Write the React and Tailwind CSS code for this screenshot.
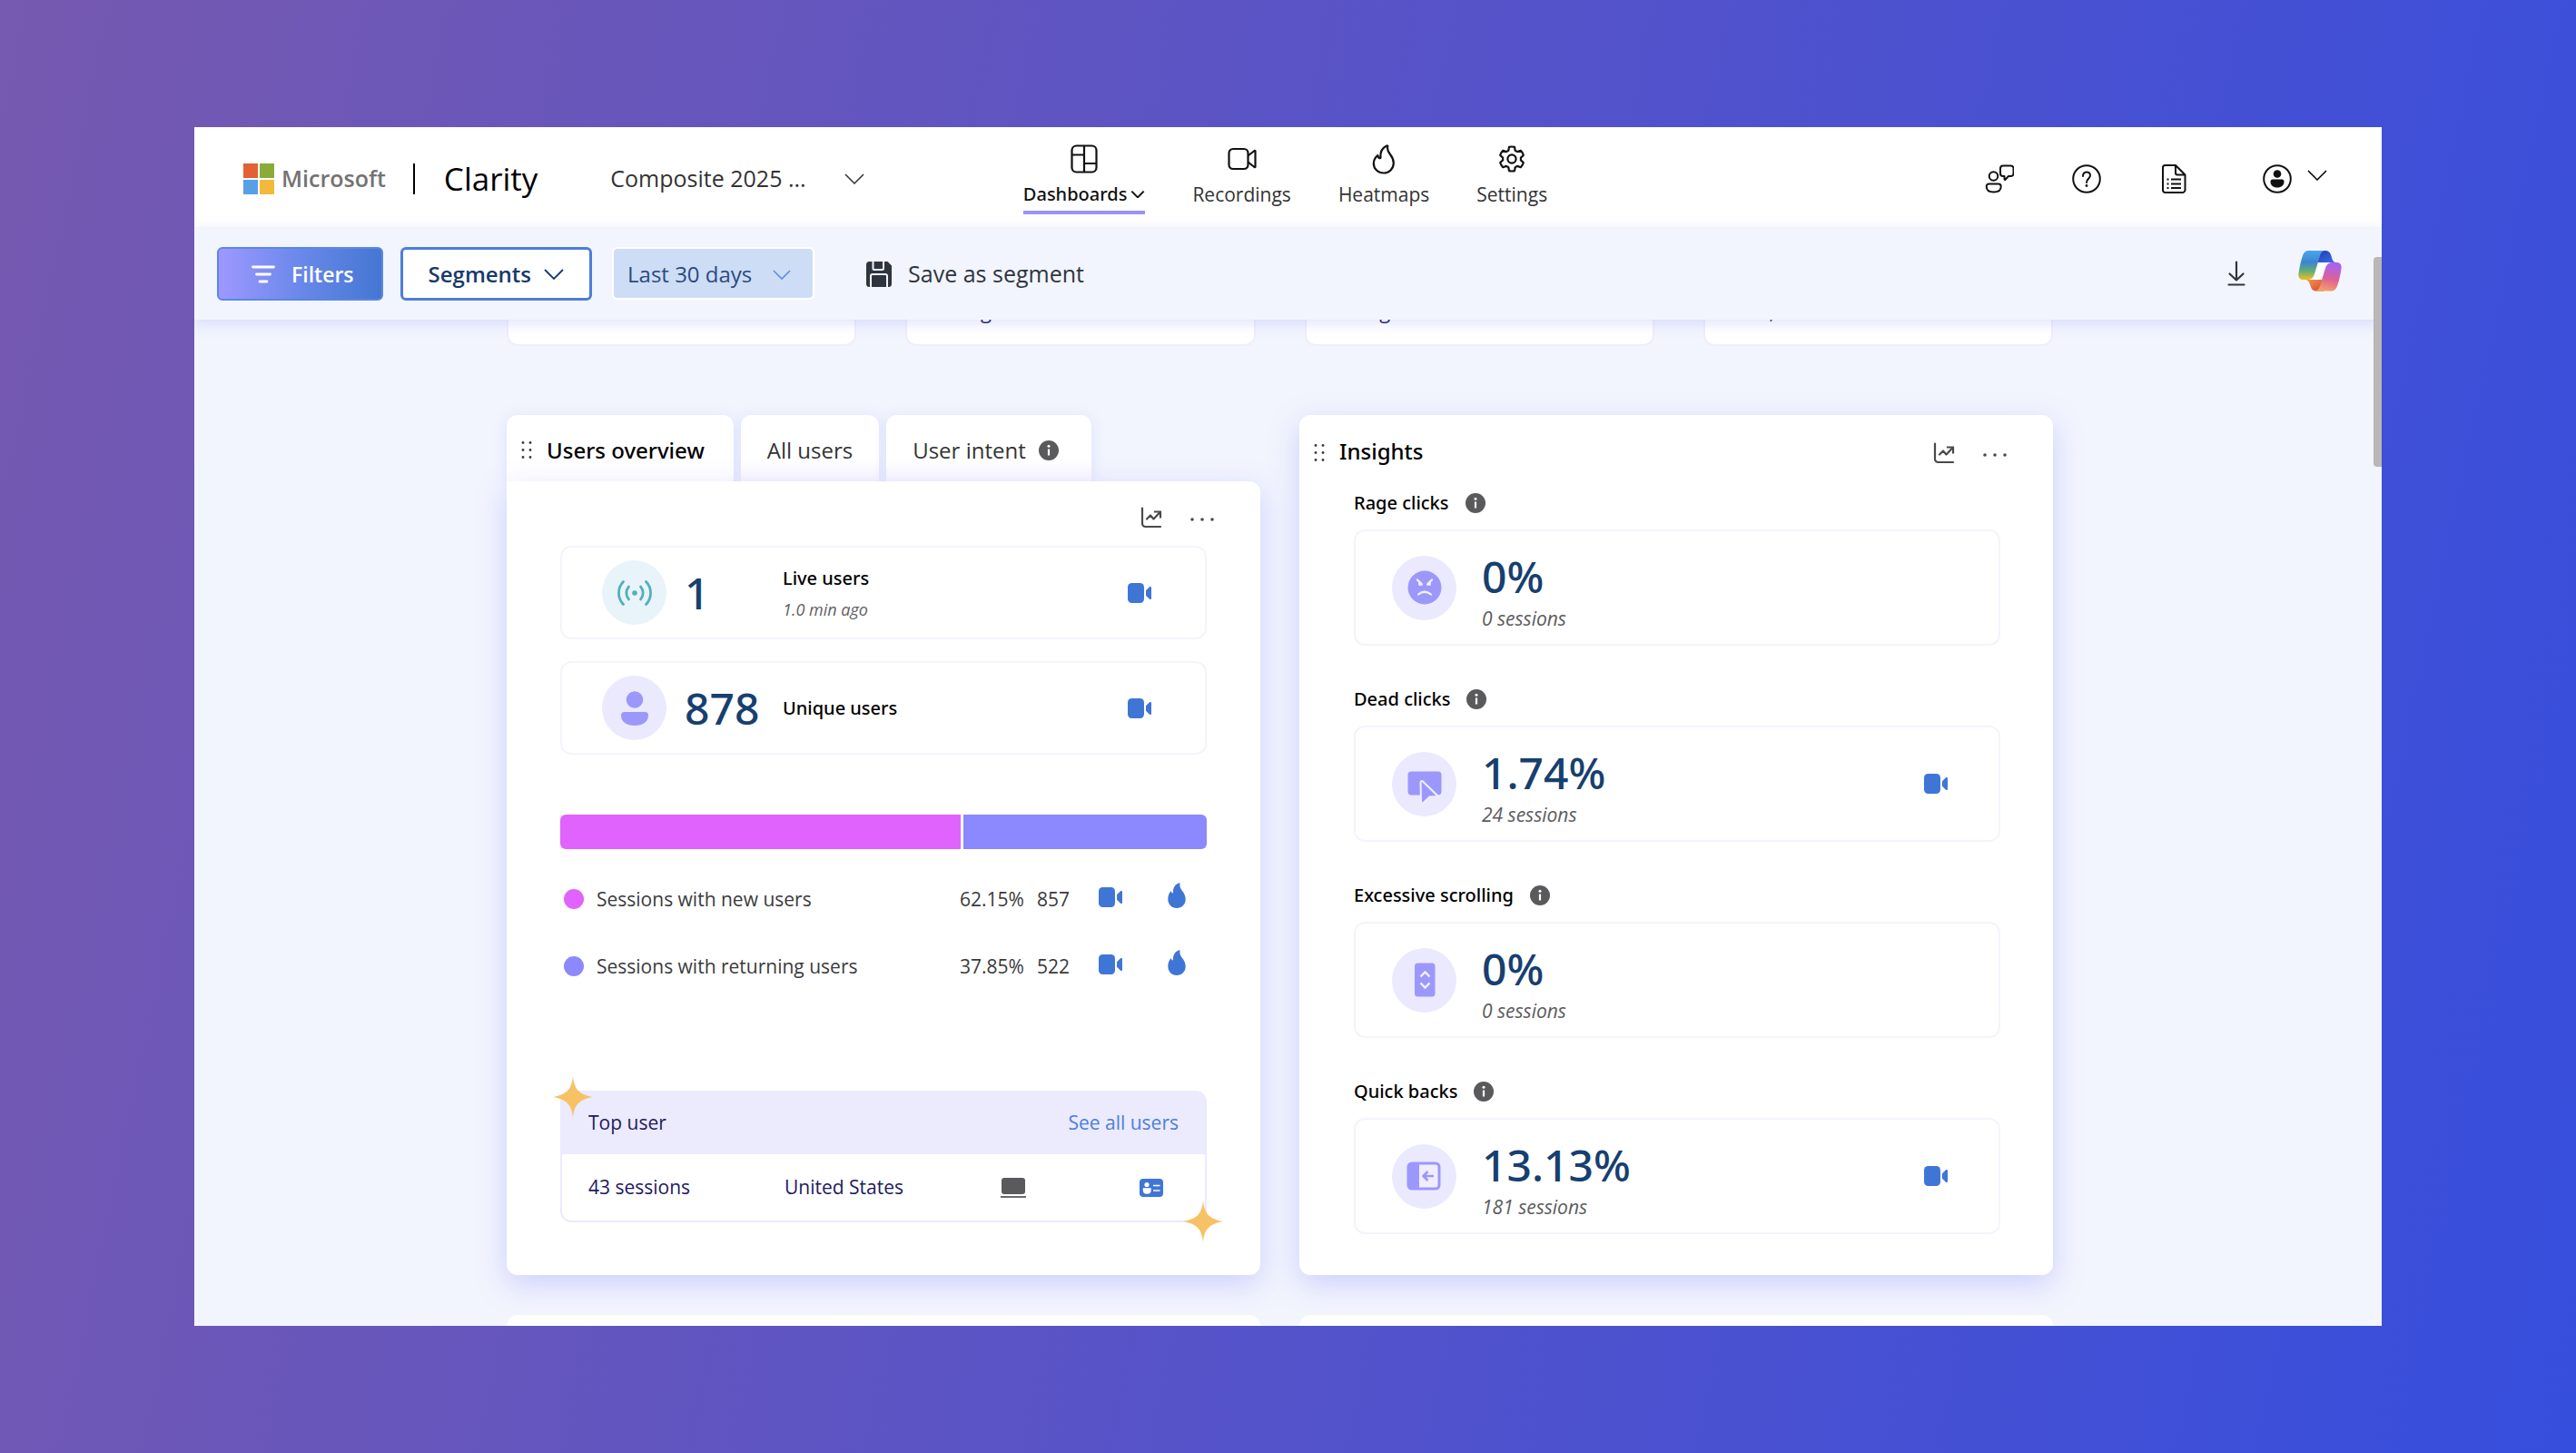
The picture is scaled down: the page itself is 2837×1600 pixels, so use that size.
import React from "react";

const Chevron = ({ className = "w-[22px] h-3", width = 2 }) => (
  <svg viewBox="0 0 22 12" className={className} fill="none" stroke="currentColor" strokeWidth={width}>
    <path d="M1 1l10 10L21 1" />
  </svg>
);

const VideoIcon = () => (
  <svg viewBox="0 0 26 22" className="w-[26px] h-[22px]" fill="#3f76d6">
    <rect width="18" height="22" rx="4.5" />
    <path d="M20 8.2l4-3.9c.8-.8 2-.3 2 .8v11.8c0 1.1-1.2 1.6-2 .8l-4-3.9z" />
  </svg>
);

const FlameIcon = () => (
  <svg viewBox="0 0 20 28" className="w-5 h-7" fill="#3f76d6">
    <path d="M12.6.3C8.3 1.8 5.8 5.5 5.9 10.8c0 .8-.8 1-1.2.4-.5-.7-.7-1.5-.8-2.3C1.5 11 .3 14.5.3 18 .3 24 4.6 28 10 28s9.7-4 9.7-9.7c0-3.7-1.5-6.4-3.3-8.8C14.3 6.7 12.9 4.3 13.5 1.2c.1-.6-.3-1.1-.9-.9z" />
  </svg>
);

const InfoIcon = () => (
  <svg viewBox="0 0 22 22" className="w-[22px] h-[22px]">
    <circle cx="11" cy="11" r="11" fill="#5a5a5c" />
    <circle cx="11" cy="6.3" r="1.5" fill="#fff" />
    <path d="M11 9.5v7" stroke="#fff" strokeWidth="2.2" />
  </svg>
);

const TrendIcon = () => (
  <svg viewBox="0 0 24 24" className="w-6 h-6" fill="none" stroke="#4a4a4c" strokeWidth="2.2" strokeLinecap="round">
    <path d="M2 1.5V18.5a3.5 3.5 0 003.5 3.5H22" />
    <path d="M7 13.5l4-4 3.5 4L21 6.5" strokeLinejoin="round" />
    <path d="M16 5.5h6v6" strokeLinecap="square" />
  </svg>
);

const MoreIcon = () => (
  <svg viewBox="0 0 26 4" className="w-[26px] h-1" fill="#4a4a4c">
    <circle cx="2" cy="2" r="1.8" />
    <circle cx="13" cy="2" r="1.8" />
    <circle cx="24" cy="2" r="1.8" />
  </svg>
);

const DragHandle = () => (
  <svg viewBox="0 0 12 19" className="w-3 h-[19px]" fill="#3c3c3e">
    {[1.5, 9.5, 17.5].map((y) => (
      <React.Fragment key={y}>
        <circle cx="2" cy={y} r="1.4" />
        <circle cx="10" cy={y} r="1.4" />
      </React.Fragment>
    ))}
  </svg>
);

const Star = ({ className }) => (
  <svg viewBox="0 0 44 46" className={`absolute w-11 h-[46px] ${className}`} fill="#f6c266">
    <path d="M22 0c1.5 14 6 20 22 23-16 3-20.5 9-22 23-1.5-14-6-20-22-23C16 20 20.5 14 22 0z" />
  </svg>
);

const MicrosoftLogo = () => (
  <svg viewBox="0 0 34 34" className="w-[34px] h-[34px]">
    <rect width="16" height="16" fill="#e26236" />
    <rect x="18" width="16" height="16" fill="#8aab38" />
    <rect y="18" width="16" height="16" fill="#57a0e6" />
    <rect x="18" y="18" width="16" height="16" fill="#f2b93d" />
  </svg>
);

const CopilotLogo = () => (
  <svg viewBox="0 0 48 45" className="w-12 h-[45px]">
    <defs>
      <linearGradient id="cp-left" x1="0" y1="0" x2="0" y2="1">
        <stop offset="0" stopColor="#4aa6ee" />
        <stop offset=".4" stopColor="#3d84d2" />
        <stop offset=".68" stopColor="#5dac7a" />
        <stop offset="1" stopColor="#ecc01f" />
      </linearGradient>
      <linearGradient id="cp-right" x1=".3" y1="0" x2="0.1" y2="1">
        <stop offset="0" stopColor="#a862f0" />
        <stop offset=".5" stopColor="#dc6196" />
        <stop offset="1" stopColor="#f8a860" />
      </linearGradient>
      <linearGradient id="cp-top" x1="0" y1="0" x2="1" y2="1">
        <stop offset="0" stopColor="#2337b8" />
        <stop offset="1" stopColor="#3a72e6" />
      </linearGradient>
      <linearGradient id="cp-bottom" x1="0" y1="0" x2="1" y2="1">
        <stop offset="0" stopColor="#f09a4e" />
        <stop offset="1" stopColor="#d8492c" />
      </linearGradient>
    </defs>
    <path d="M20 0h10c3 0 5 1.5 6 4.5l1.6 5c.7 2 2 3.3 4.4 3.5H22z" fill="url(#cp-top)" />
    <path d="M28 44.5H20c-3 0-5-1.5-6-4.5l-1.6-4.5c-.7-2-2-3.2-4.4-3.5h20z" fill="url(#cp-bottom)" />
    <path d="M11.5 0H29c-2.5.5-4 2.5-5 5.5l-6 20c-1.2 4-3.5 6.5-8 6.5H5.5C1.5 32-.2 29 .5 25 1.5 18 3 11 5 5.5 6.2 2 8.3 0 11.5 0z" fill="url(#cp-left)" />
    <path d="M36.5 44.5H19c2.5-.5 4-2.5 5-5.5l6-19.5c1.2-4 3.5-6.5 8-6.5h4.5c4 0 5.7 3 5 7-1 7-2.5 13.5-4.5 19-1.2 3.5-3.3 5.5-6.5 5.5z" fill="url(#cp-right)" />
    <path d="M22.5 13.5h8.5c-1 1.2-1.7 3-2.3 5l-3 9.5c-1 2.7-3 4-5.5 4H15c2-1 3-3.5 3.8-6z" fill="#fff" />
  </svg>
);

const navIcons = {
  dashboards: (
    <>
      <rect x="2.5" y="2.5" width="27" height="29" rx="5" />
      <path d="M16 2.5v29M2.5 12.5H16M16 22h13.5" />
    </>
  ),
  recordings: (
    <>
      <rect x="1.5" y="6" width="21" height="22" rx="4.5" />
      <path d="M22.5 13.5l7-5.5c.4-.3 1 0 1 .5v17c0 .5-.6.8-1 .5l-7-5.5" />
    </>
  ),
  heatmaps: (
    <path d="M19.5 2.5c-5 2-7.5 7-7 13-.2 1-1.4 1-2 .2-.7-.8-1-1.8-1.2-2.7C6 16 4.8 18.5 4.8 22c0 6 5 10.5 11 10.5s11-4.5 11-11c0-4-1.8-7-3.8-9.5-2.3-3-3.7-5.5-2.7-8.8.1-.5-.3-.9-.8-.7z" />
  ),
  settings: (
    <>
      <circle cx="16" cy="17" r="4.6" />
      <path d="M13 2.7q3-.8 6 0l.7 3.8 2.4 1.4 3.7-1.3q2.2 2.3 3 5.2l-2.9 2.6v2.8l2.9 2.6q-.8 2.9-3 5.2l-3.7-1.3-2.4 1.4-.7 3.8q-3 .8-6 0l-.7-3.8-2.4-1.4L6.2 25q-2.2-2.3-3-5.2l2.9-2.6v-2.8l-2.9-2.6q.8-2.9 3-5.2l3.7 1.3 2.4-1.4z" transform="translate(0 1.2)" />
    </>
  ),
};

const NAV = [
  { id: "dashboards", label: "Dashboards", active: true },
  { id: "recordings", label: "Recordings" },
  { id: "heatmaps", label: "Heatmaps" },
  { id: "settings", label: "Settings" },
];

const insightIcons = {
  rage: (
    <>
      <circle cx="19" cy="19" r="18.5" fill="#9c98fb" />
      <path d="M11 10.5l5 5M27 10.5l-5 5" stroke="#f3f1ff" strokeWidth="2.2" strokeLinecap="round" />
      <circle cx="14" cy="15" r="2" fill="#f3f1ff" />
      <circle cx="24" cy="15" r="2" fill="#f3f1ff" />
      <path d="M12 26.5q7-5.5 14 0" fill="none" stroke="#f3f1ff" strokeWidth="2.2" strokeLinecap="round" />
    </>
  ),
  dead: (
    <>
      <rect x=".5" y="5.5" width="37" height="26" rx="4" fill="#9c98fb" />
      <path d="M14.5 17.5c0-1.4 1.6-2 2.5-1L34 33l-9.5.6-7 6.4c-1 .8-2.5.3-2.5-1z" fill="#9c98fb" stroke="#f0eeff" strokeWidth="2" />
    </>
  ),
  scroll: (
    <>
      <rect x="8" y=".5" width="22.5" height="37" rx="3.5" fill="#9c98fb" />
      <path d="M14.5 15.5l5-5 5 5M14.5 22.5l5 5 5-5" fill="none" stroke="#f3f1ff" strokeWidth="2.4" />
    </>
  ),
  back: (
    <>
      <rect x="1" y="5" width="34" height="28" rx="4" fill="#efedff" stroke="#9c98fb" strokeWidth="3" />
      <path d="M1 8a4 4 0 014-4h8v30H5a4 4 0 01-4-4z" fill="#9c98fb" />
      <path d="M29 19H18M22.5 14l-5 5 5 5" fill="none" stroke="#9c98fb" strokeWidth="2.6" />
    </>
  ),
};

const INSIGHTS = [
  { id: "rage", label: "Rage clicks", value: "0%", sessions: "0 sessions" },
  { id: "dead", label: "Dead clicks", value: "1.74%", sessions: "24 sessions", recordings: true },
  { id: "scroll", label: "Excessive scrolling", value: "0%", sessions: "0 sessions" },
  { id: "back", label: "Quick backs", value: "13.13%", sessions: "181 sessions", recordings: true },
];

const SESSIONS = [
  { label: "Sessions with new users", percent: "62.15%", count: 857, dot: "bg-[#e063fd]" },
  { label: "Sessions with returning users", percent: "37.85%", count: 522, dot: "bg-[#8c88fd]" },
];

const Header = () => (
  <header className="grid grid-cols-[1fr_auto_1fr] h-[110px] shrink-0 bg-white pl-[54px] pr-[60px]">
    <div className="flex items-center pt-1">
      <MicrosoftLogo />
      <span className="ml-2 text-[25px] font-semibold text-[#737373]">Microsoft</span>
      <span className="ml-[30px] h-[34px] w-0.5 bg-black" />
      <span className="ml-8 text-[35px] text-black">Clarity</span>
      <div className="ml-20 flex items-center gap-[42px] text-[#333]">
        <select aria-label="Project" className="appearance-none text-[25px] outline-none">
          <option>Composite 2025 ...</option>
        </select>
        <Chevron width={1.5} />
      </div>
    </div>

    <nav className="flex items-start gap-[52px] pt-[18px]">
      {NAV.map(({ id, label, active }) => (
        <button key={id} className="flex flex-col items-center">
          <svg viewBox="0 0 32 34" className="w-8 h-[34px]" fill="none" stroke="#111" strokeWidth="2.2" strokeLinejoin="round">
            {navIcons[id]}
          </svg>
          <span
            className={`mt-2 flex items-center gap-1 leading-7 ${
              active ? "font-['Noto_Sans'] text-[20px] font-medium text-[#111]" : "text-[21px] text-[#333]"
            }`}
          >
            {label}
            {active && <Chevron className="w-4 h-2" width={3} />}
          </span>
          {active && <span className="mt-1 h-1 w-full bg-[#9b93fb]" />}
        </button>
      ))}
    </nav>

    <div className="flex items-center justify-end pt-1">
      <button aria-label="Feedback">
        <svg viewBox="0 0 32 32" className="w-8 h-8" fill="none" stroke="#111" strokeWidth="2" strokeLinejoin="round">
          <circle cx="9.5" cy="13" r="4.8" />
          <path d="M4.5 21.5h10.5a2.7 2.7 0 012.7 2.7c0 4-3 6.3-8 6.3s-8-2.3-8-6.3a2.7 2.7 0 012.8-2.7z" />
          <path d="M20 1.5h8.5a3 3 0 013 3v5.5a3 3 0 01-3 3h-2.5l-3.5 3.7c-.5.5-1 .2-1-.4V13h-1.5a3 3 0 01-3-3V4.5a3 3 0 013-3z" />
        </svg>
      </button>
      <button aria-label="Help" className="ml-16">
        <svg viewBox="0 0 32 32" className="w-8 h-8" fill="none" stroke="#111" strokeWidth="2">
          <circle cx="16" cy="16" r="14.8" />
          <path d="M12 13c0-6 8-6 8-.8 0 3.5-4 3.8-4 7.8" strokeLinecap="round" />
          <circle cx="16" cy="23.5" r="1.4" fill="#111" stroke="none" />
        </svg>
      </button>
      <button aria-label="Documentation" className="ml-16">
        <svg viewBox="0 0 32 32" className="w-8 h-8" fill="none" stroke="#111" strokeWidth="2" strokeLinejoin="round">
          <path d="M6.5 1h11.5L28.5 11.5V28a3 3 0 01-3 3h-19a2.5 2.5 0 01-2.5-2.5V3.5A2.5 2.5 0 016.5 1zM18 1v8.5a2 2 0 002 2h8.5" />
          <path d="M13 16.5h11M13 21.5h11M13 26h11M8.5 16.5h2M8.5 21.5h2M8.5 26h2" />
        </svg>
      </button>
      <button aria-label="Account" className="ml-[82px] flex items-center gap-[17px]">
        <svg viewBox="0 0 32 32" className="w-8 h-8" fill="#111">
          <circle cx="16" cy="16" r="14.8" fill="none" stroke="#111" strokeWidth="2" />
          <circle cx="16" cy="10.5" r="4.3" />
          <path d="M11 16.5h10a2.5 2.5 0 012.5 2.5c0 4-3 6.5-7.5 6.5S8.5 23 8.5 19a2.5 2.5 0 012.5-2.5z" />
        </svg>
        <Chevron className="mb-2 h-3 w-[22px]" width={1.5} />
      </button>
    </div>
  </header>
);

const Toolbar = () => (
  <div className="relative z-10 flex h-[102px] shrink-0 items-center bg-[#f2f5fd] pl-[25px] pr-11 shadow-[0_4px_14px_#8a8aff40]">
    <button className="flex h-[59px] items-center gap-[18px] rounded-md border-2 border-[#5a86e6] bg-linear-to-r from-[#9d98ff] via-[#6a88ea] to-[#4377d2] pt-0.5 pr-[30px] pl-9 text-[23px] font-semibold text-white">
      <svg viewBox="0 0 26 20" className="w-[26px] h-5" stroke="#fff" strokeWidth="2.8" strokeLinecap="round">
        <path d="M1.5 2h23M5.5 10h15M9 18h8" />
      </svg>
      Filters
    </button>
    <button className="ml-[19px] flex h-[59px] items-center gap-[14px] rounded-md border-[3px] border-[#4a7fd9] bg-white px-7 pt-0.5 text-[24px] font-semibold text-[#173a6b]">
      Segments
      <Chevron width={1.8} />
    </button>
    <div className="ml-[22px] flex h-[58px] items-center gap-[22px] rounded-md border-2 border-white bg-[#cdddf5] px-[15px] pt-0.5 pr-6 text-[#2b4a80]">
      <select aria-label="Date range" className="appearance-none text-[24px] outline-none">
        <option>Last 30 days</option>
      </select>
      <Chevron className="w-5 h-[11px] text-[#5f8ee0]" width={1.8} />
    </div>
    <button className="ml-[57px] flex items-center gap-[18px] pt-0.5 text-[25px] text-[#2f3540]">
      <svg viewBox="0 0 28 28" className="w-7 h-7">
        <path d="M3.5 0h20L28 4.5v20a3.5 3.5 0 01-3.5 3.5h-21A3.5 3.5 0 010 24.5v-21A3.5 3.5 0 013.5 0z" fill="#2f3540" />
        <path d="M7.5 0v7.5a1.5 1.5 0 001.5 1.5h8.5a1.5 1.5 0 001.5-1.5V0M5 28V16a2 2 0 012-2h14a2 2 0 012 2v12" fill="none" stroke="#f2f5fd" strokeWidth="2" />
      </svg>
      Save as segment
    </button>
    <button aria-label="Download" className="ml-auto">
      <svg viewBox="0 0 20 28" className="w-5 h-7" fill="none" stroke="#2f3540" strokeWidth="2.2" strokeLinecap="round" strokeLinejoin="round">
        <path d="M10 1.5v20M2.5 14.5l7.5 7 7.5-7M1.5 26.5h17" />
      </svg>
    </button>
    <button aria-label="Copilot" className="mb-1.5 ml-[58px]">
      <CopilotLogo />
    </button>
  </div>
);

const CardActions = () => (
  <div className="flex items-center gap-[31px]">
    <button aria-label="View trend">
      <TrendIcon />
    </button>
    <button aria-label="More options" className="pt-1">
      <MoreIcon />
    </button>
  </div>
);

const Stat = ({ icon, tint, value, label, note }) => (
  <div className="flex h-[103px] items-center rounded-xl border-2 border-[#f3f4fd] pl-11 pr-[59px]">
    <div className={`flex size-[71px] items-center justify-center rounded-full ${tint}`}>{icon}</div>
    <span className="ml-5 w-[108px] font-['Noto_Sans'] text-[48px] leading-[52px] font-medium text-[#173f70]">{value}</span>
    <div className="flex flex-col gap-2">
      <span className="font-['Noto_Sans'] text-[20px] leading-7 font-medium text-black">{label}</span>
      {note && <span className="text-[18px] leading-6 italic text-[#616163]">{note}</span>}
    </div>
    <button aria-label={`${label} recordings`} className="ml-auto">
      <VideoIcon />
    </button>
  </div>
);

const UsersOverview = () => (
  <section className="flex flex-col">
    <div className="flex h-[73px] gap-2" role="tablist">
      <button role="tab" aria-selected="true" className="flex items-center gap-4 rounded-t-xl bg-white pt-1 pl-4 pr-8 font-['Noto_Sans'] text-[24px] font-medium text-black shadow-[0_2px_16px_#8a8aff30]">
        <DragHandle />
        Users overview
      </button>
      <button role="tab" aria-selected="false" className="rounded-t-xl bg-linear-to-b from-white from-70% to-[#f8f6ff] px-[29px] pt-1 text-[24px] text-[#333] shadow-[0_2px_16px_#8a8aff30]">
        All users
      </button>
      <button role="tab" aria-selected="false" className="flex items-center gap-[14px] rounded-t-xl bg-linear-to-b from-white from-70% to-[#f8f6ff] pt-1 pl-[29px] pr-9 text-[24px] text-[#333] shadow-[0_2px_16px_#8a8aff30]">
        User intent
        <InfoIcon />
      </button>
    </div>

    <div className="relative rounded-xl rounded-tl-none bg-white px-[59px] pb-[58px] shadow-[0_10px_32px_#8a8aff59]">
      <div className="flex h-[71px] items-center justify-end pt-2 -mr-2">
        <CardActions />
      </div>

      <div className="flex flex-col gap-6">
        <Stat
          value="1"
          label="Live users"
          note="1.0 min ago"
          tint="bg-[#e8f4fa]"
          icon={
            <svg viewBox="0 0 38 30" className="w-[38px] h-[30px]" fill="none" stroke="#55aebb" strokeWidth="2.8" strokeLinecap="round">
              <circle cx="19" cy="15" r="2.8" fill="#55aebb" stroke="none" />
              <path d="M12.5 8a10.5 10.5 0 000 14M25.5 8a10.5 10.5 0 010 14M6.5 2.5a18 18 0 000 25M31.5 2.5a18 18 0 010 25" />
            </svg>
          }
        />
        <Stat
          value="878"
          label="Unique users"
          tint="bg-[#ebe9fe]"
          icon={
            <svg viewBox="0 0 30 38" className="w-[30px] h-[38px]" fill="#9c98fb">
              <circle cx="15" cy="9.5" r="9.3" />
              <path d="M3.5 23h23a3.5 3.5 0 013.5 3.5C30 34 24 38 15 38S0 34 0 26.5A3.5 3.5 0 013.5 23z" />
            </svg>
          }
        />
      </div>

      <div className="mt-[66px] grid h-[38px] grid-cols-[62.15fr_37.85fr] gap-[3px]">
        <div className="rounded-l-md bg-[#e063fd]" />
        <div className="rounded-r-md bg-[#8c88fd]" />
      </div>

      <ul className="mt-[18px]">
        {SESSIONS.map(({ label, percent, count, dot }) => (
          <li key={label} className="flex h-[74px] items-center pl-1 pr-[23px] text-[21px] text-[#3b3b3d]">
            <span className={`size-[22px] rounded-full ${dot}`} />
            <span className="ml-[14px] pt-0.5">{label}</span>
            <span className="ml-auto pt-0.5">{percent}</span>
            <span className="ml-[14px] pt-0.5">{count}</span>
            <button aria-label={`${label} recordings`} className="ml-8 pb-1">
              <VideoIcon />
            </button>
            <button aria-label={`${label} heatmaps`} className="ml-[50px] pb-2">
              <FlameIcon />
            </button>
          </li>
        ))}
      </ul>

      <div className="relative mt-[100px] rounded-xl border-2 border-[#eceafd] text-[21px] text-[#211a5e]">
        <div className="flex h-[68px] items-center justify-between rounded-t-lg bg-[#eceafd] px-[29px]">
          <span>Top user</span>
          <a href="#users" className="text-[#4a7fdc]">
            See all users
          </a>
        </div>
        <div className="grid h-[73px] grid-cols-[216fr_238fr_153fr_72fr] items-center pl-[29px]">
          <span>43 sessions</span>
          <span>United States</span>
          <svg viewBox="0 0 28 22" className="w-7 h-[22px]">
            <rect x="1" width="26" height="18" rx="3" fill="#5a5a5c" />
            <path d="M0 21h28" stroke="#6a6a6c" strokeWidth="2" />
          </svg>
          <button aria-label="User profile" className="w-[26px]">
            <svg viewBox="0 0 26 20" className="w-[26px] h-5">
              <rect width="26" height="20" rx="4" fill="#3f76d6" />
              <circle cx="8" cy="6.5" r="2.6" fill="#fff" />
              <path d="M4.5 11h7.5v1.5c0 2.5-1.5 3.5-3.8 3.5s-3.7-1-3.7-3.5zM15 7.5h7.5M15 13h7.5" fill="#fff" stroke="#fff" strokeWidth="1.5" />
            </svg>
          </button>
        </div>
        <Star className="-top-[18px] -left-2.5" />
        <Star className="-right-5 -bottom-6" />
      </div>
    </div>
  </section>
);

const Insights = () => (
  <section className="rounded-xl bg-white pb-11 shadow-[0_10px_32px_#8a8aff59]">
    <div className="flex h-[83px] items-center pl-4 pr-[51px]">
      <DragHandle />
      <h2 className="ml-4 mr-auto pb-1 font-['Noto_Sans'] text-[24px] font-medium text-black">Insights</h2>
      <CardActions />
    </div>
    <div className="flex flex-col gap-[45px] pl-[60px] pr-[58px]">
      {INSIGHTS.map(({ id, label, value, sessions, recordings }) => (
        <div key={id}>
          <h3 className="flex items-center gap-[18px] font-['Noto_Sans'] text-[20px] leading-7 font-medium text-black">
            {label}
            <InfoIcon />
          </h3>
          <div className="mt-[15px] flex h-32 items-center rounded-xl border-2 border-[#f3f4fd] pl-10 pr-14">
            <div className="flex size-[71px] items-center justify-center rounded-full bg-[#ebe9fe]">
              <svg viewBox="0 0 38 38" className="size-[38px] overflow-visible">
                {insightIcons[id]}
              </svg>
            </div>
            <div className="ml-7 flex flex-col gap-2 pt-2">
              <span className="font-['Noto_Sans'] text-[48px] leading-[52px] font-medium text-[#173f70]">{value}</span>
              <span className="text-[21px] leading-6 italic text-[#5c5c5e]">{sessions}</span>
            </div>
            {recordings && (
              <button aria-label={`${label} recordings`} className="ml-auto">
                <VideoIcon />
              </button>
            )}
          </div>
        </div>
      ))}
    </div>
  </section>
);

export default function App() {
  return (
    <div className="flex h-screen flex-col bg-[linear-gradient(102deg,#7659b0,#5753c8_50%,#364edd)] px-[214px] py-[140px] font-['Open_Sans','Noto_Sans',sans-serif]">
      <div className="relative flex min-h-0 flex-1 flex-col overflow-hidden bg-[#f2f5fd]">
        <Header />
        <Toolbar />

        <main className="flex-1 overflow-hidden pr-[18px]">
          <div className="mx-auto max-w-[1703px]">
            <div className="grid grid-cols-4 gap-[54px] text-[22px] leading-6 text-[#211a5e]">
              {["", "average", "average", "total,"].map((caption, i) => (
                <div key={i} className="flex h-[29px] items-end overflow-hidden rounded-b-xl border-x-2 border-b-2 border-[#efedfd] bg-white pb-[25px] pl-6">
                  {caption}
                </div>
              ))}
            </div>

            <div className="mt-[76px] grid grid-cols-2 gap-x-[43px] gap-y-11">
              <UsersOverview />
              <Insights />
              <section className="h-40 rounded-xl bg-white" />
              <section className="h-40 rounded-xl bg-white" />
            </div>
          </div>
        </main>

        {/* scrollbar thumb */}
        <div className="absolute top-[143px] right-0 z-20 h-[231px] w-[9px] rounded-l bg-[#b9b7b7]" />
      </div>
    </div>
  );
}
